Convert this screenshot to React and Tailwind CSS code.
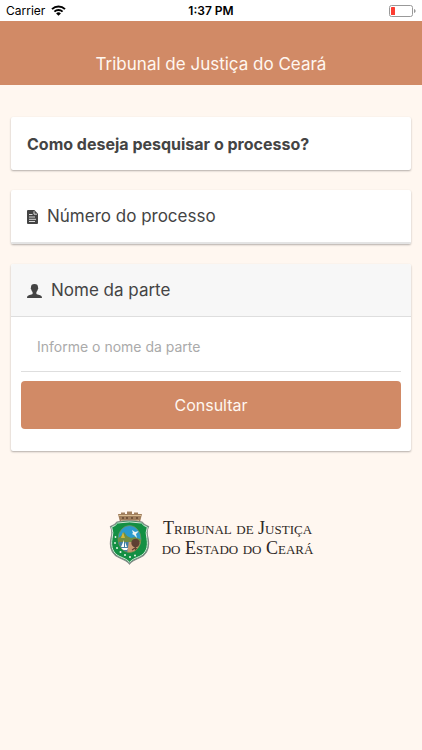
import React, { useState } from 'react';

function App() {
    return (
        <div className="min-h-screen bg-[#fff7f0] font-['Inter',sans-serif] text-[#444444]">
            <StatusBar />
            <header className="h-16 bg-[#d18a66] flex items-end justify-center pb-2">
                <h1 className="text-[17px] leading-[26px] text-[#fff7f0]">Tribunal de Justiça do Ceará</h1>
            </header>

            <main className="px-[11px] pt-8 flex flex-col gap-5">
                <Card>
                    <h2 className="h-[53px] px-4 flex items-center text-base font-bold">Como deseja pesquisar o processo?</h2>
                </Card>
                <SearchOptions />
            </main>

            <footer className="mt-[60px] flex items-center justify-center gap-3">
                <Crest />
                <p className="font-['Liberation_Serif',serif] [font-variant:small-caps] text-[18px] leading-5 text-center text-[#2d2826]">
                    Tribunal de Justiça<br />do Estado do Ceará
                </p>
            </footer>
        </div>
    );
}

function StatusBar() {
    return (
        <div className="h-[21px] px-[6px] bg-white text-black text-xs grid grid-cols-3 items-center">
            <div className="flex items-center gap-[6px]">
                <span>Carrier</span>
                <svg className="w-[15px] h-[11px]" viewBox="0 0 15 11" fill="none" stroke="currentColor">
                    <path d="M1 4.1a9.4 9.4 0 0 1 13 0" strokeWidth="2" />
                    <path d="M3.4 6.6a5.9 5.9 0 0 1 8.2 0" strokeWidth="1.9" />
                    <path d="M7.5 10.8 5.1 8.4a3.4 3.4 0 0 1 4.8 0z" fill="currentColor" stroke="none" />
                </svg>
            </div>
            <span className="text-center font-semibold">1:37 PM</span>
            <svg className="w-[27px] h-[12px] justify-self-end" viewBox="0 0 27 12">
                <rect x="0.5" y="0.5" width="23" height="11" rx="2" fill="white" stroke="#999999" />
                <rect x="2" y="2" width="4" height="8" rx="0.6" fill="#fc3d32" />
                <path d="M25 4v4c.9-.3 1.6-1 1.6-2s-.7-1.7-1.6-2z" fill="#999999" />
            </svg>
        </div>
    );
}

function Card({ children }) {
    return (
        <section className="bg-white rounded-[2px] overflow-hidden shadow-[0_1px_2px_rgba(0,0,0,0.3)]">
            {children}
        </section>
    );
}

function SearchOptions() {
    const [name, setName] = useState('');

    return (
        <>
            <Card>
                <button type="button" className="w-full h-[54px] px-4 pt-[2px] flex items-center gap-[9px] border-b-2 border-[#e4e4e4] text-[17px]">
                    <FileIcon />
                    Número do processo
                </button>
            </Card>

            <Card>
                <button type="button" aria-expanded="true" className="w-full h-[53px] px-4 pt-[2px] flex items-center gap-[9px] bg-[#f7f7f7] border-b border-[#dedede] text-[17px]">
                    <PersonIcon />
                    Nome da parte
                </button>
                <form className="px-[10px] pb-[22px]" onSubmit={(e) => e.preventDefault()}>
                    <input
                        type="text"
                        aria-label="Nome da parte"
                        placeholder="Informe o nome da parte"
                        value={name}
                        onChange={(e) => setName(e.target.value)}
                        className="block w-full h-[55px] px-4 pt-1 border-b border-[#dedede] text-sm outline-none placeholder:text-[#aaaaaa]"
                    />
                    <button type="submit" className="mt-[9px] w-full h-12 rounded bg-[#d18a66] text-base text-[#fff7f0]">
                        Consultar
                    </button>
                </form>
            </Card>
        </>
    );
}

function FileIcon() {
    return (
        <svg className="w-[11px] h-[14px]" viewBox="0 0 11 14">
            <path d="M1 0h6.3L11 3.700V13a1 1 0 0 1-1 1H1a1 1 0 0 1-1-1V1a1 1 0 0 1 1-1z" fill="#444444" />
            <path d="M7 1.200v3h3" stroke="white" strokeWidth="0.8" fill="none" />
            <path d="M2 4.500h3.500M2 7h6M2 9.300h7M2 11.500h6" stroke="white" strokeWidth="0.8" />
        </svg>
    );
}

function PersonIcon() {
    return (
        <svg className="w-[15px] h-[14px]" viewBox="0 0 15 14" fill="#444444">
            <path d="M7.500 0c2.400 0 3.700 1.100 3.500 3.500.5.300.3 1.700-.3 2.100-.2 1.100-.6 1.900-1.300 2.500v1.900c.5.500 1.700.7 3.100 1.100 1.700.5 2.400 1.300 2.500 2.900H0c.1-1.600.8-2.400 2.500-2.900 1.400-.4 2.600-.6 3.100-1.100V8.100C4.900 7.500 4.500 6.700 4.300 5.600c-.6-.4-.8-1.800-.3-2.100C3.800 1.100 5.100 0 7.500 0z" />
        </svg>
    );
}

function Crest() {
    return (
        <svg className="w-[41px] h-[54px]" viewBox="0 0 41 54">
            {/* mural crown */}
            <path d="M9 3h3V1.500h4V3h2V.5h5V3h2V1.500h4V3h4l-2 8H11z" fill="#a17f5d" />
            <path d="M10 4.500h22M12 9.500h18" stroke="#d9bd92" />
            <path d="M13 7h2M17 7h2M22 7h2M27 7h2" stroke="#62472f" strokeWidth="1.5" />
            {/* shield */}
            <path d="M8 11Q20.500 8.500 33 11q2 3 6.500 4.500Q37 21 39 27c2 10-1.500 16.500-8 19.500-5 2-8.500 3.500-10.500 6.500-2-3-5.500-4.500-10.500-6.500C3.500 43.500 0 37 2 27q2-6-.5-11.500Q6 14 8 11z" fill="#138f43" stroke="#858989" strokeWidth="1.2" />
            <path d="M8.600 12Q20.500 9.800 32.400 12q2 2.800 5.900 4.200-2.100 5.300-.4 11.300c1.700 9-1.300 15-7.400 17.900-4.700 2-8 3.300-10 5.900-2-2.600-5.300-3.900-10-5.900C4.400 42.500 1.400 36.500 3.100 27.500q1.700-6-.4-11.300Q6.600 14.800 8.600 12z" fill="none" stroke="#eef3ed" strokeWidth="0.9" />
            {/* oval scene */}
            <clipPath id="crest-oval"><ellipse cx="20.5" cy="28" rx="11.5" ry="13.5" /></clipPath>
            <g clipPath="url(#crest-oval)">
                <path d="M8 14h25v15H8z" fill="#2b9bcd" />
                <path d="M8 28h13v14H8z" fill="#4280a4" />
                <path d="M20 29h13v14H18z" fill="#c79a73" />
                <path d="M8 28l4-3 3-4 3 4 4 2 4-1 7 3v2H8z" fill="#718e43" />
                <path d="M14 21l2 6h-4z" fill="#d2b83a" />
                <path d="M23 19l3 2 4-1-3 3 1 4-3-3-2-1 1-1z" fill="#edf6f4" />
                <path d="M15 29v7h-3zM16 31v5h2zM11 37h8l-1 2h-6z" fill="white" />
                <circle cx="26.5" cy="32" r="4.2" fill="#5d3f32" />
                <path d="M26.500 32v8M23 39l3-2 4 2" stroke="#5d3f32" strokeWidth="1.2" fill="none" />
            </g>
            <ellipse cx="20.5" cy="28" rx="11.5" ry="13.5" fill="none" stroke="#7b8f4a" strokeWidth="0.7" />
            {/* stars */}
            <g fill="#e9f5e8">
                <circle cx="6.5" cy="26" r="0.9" /><circle cx="6" cy="32" r="0.9" />
                <circle cx="8" cy="37" r="1" /><circle cx="11.5" cy="41" r="1" />
                <circle cx="16" cy="44" r="1" /><circle cx="21" cy="46" r="1" />
                <circle cx="26" cy="44.5" r="1" />
            </g>
        </svg>
    );
}

export default App;
